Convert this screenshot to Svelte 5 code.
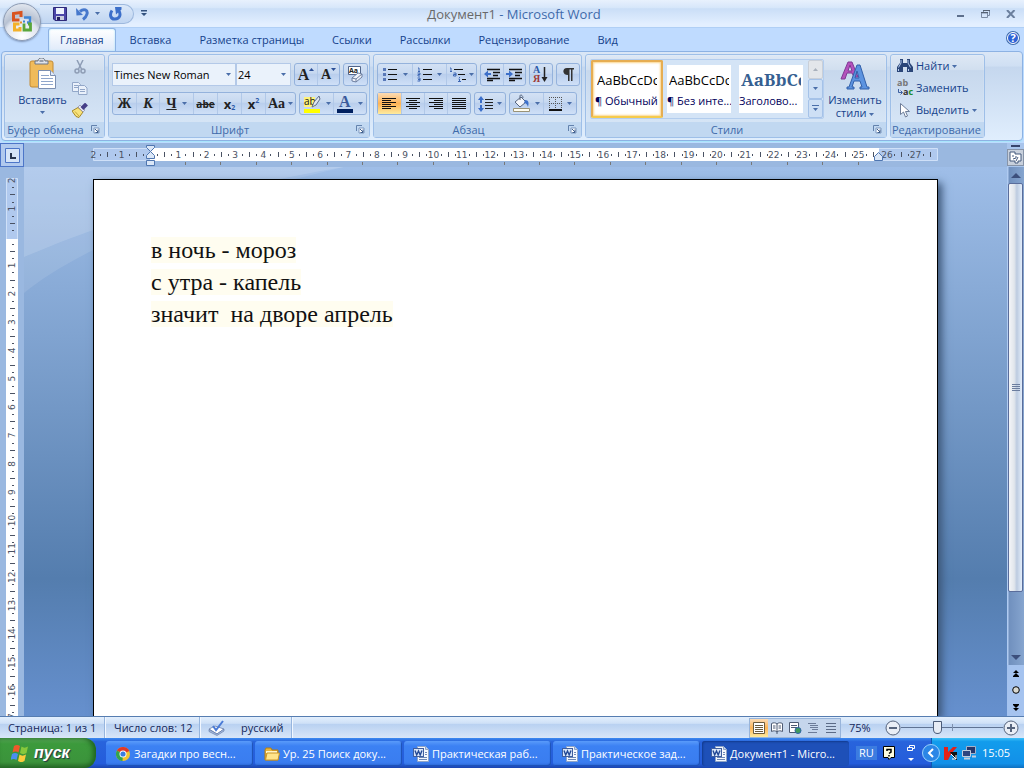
<script>
  const tabs = ['Главная', 'Вставка', 'Разметка страницы', 'Ссылки', 'Рассылки', 'Рецензирование', 'Вид'];
  let activeTab = $state('Главная');

  const styles = [
    { name: '¶ Обычный', sample: 'AaBbCcDc' },
    { name: '¶ Без инте...', sample: 'AaBbCcDc' },
    { name: 'Заголово...', sample: 'AaBbCc', heading: true }
  ];
  let activeStyle = $state(0);

  const lines = ['в ночь - мороз', 'с утра - капель', 'значит  на дворе апрель'];

  const tasks = [
    { icon: 'chrome', title: 'Загадки про весн...' },
    { icon: 'folder', title: 'Ур. 25 Поиск доку...' },
    { icon: 'word', title: 'Практическая раб...' },
    { icon: 'word', title: 'Практическое зад...' },
    { icon: 'word', title: 'Документ1 - Micro...', active: true }
  ];

  // one centimetre of the ruler at 75% zoom
  const cm = 28.35;

  function marks(from, to) {
    const list = [];
    for (let q = from * 4; q <= to * 4; q++) {
      if (q === 0) continue;
      list.push({
        at: (q / 4) * cm,
        kind: q % 4 === 0 ? 'label' : q % 2 === 0 ? 'tick' : 'dot',
        label: Math.abs(q / 4)
      });
    }
    return list;
  }

  const across = marks(-2, 27.5);
  const down = marks(-2, 30);
  const tabStops = Array.from({ length: 20 }, (_, i) => 92 + i * 35.4);
</script>

{#snippet caret()}
  <svg class="caret" width="5" height="3" viewBox="0 0 5 3"><path d="M0 0h5L2.500 3z" fill="#4a6ea9" /></svg>
{/snippet}

{#snippet launcher(label)}
  <button class="launcher" aria-label={label}>
    <svg width="9" height="9" viewBox="0 0 9 9">
      <path d="M.5 6V.5H6" fill="none" stroke="#6382ad" />
      <path d="M3 3h5v5H3z" fill="#fff" stroke="#7b97bf" />
      <path d="M4 4l3 3M7 4.500v3H4.500" fill="none" stroke="#41618f" />
    </svg>
  </button>
{/snippet}

{#snippet bars(kind)}
  <svg width="15" height="11" viewBox="0 0 15 11" stroke="#111" fill="none">
    {#if kind === 'left'}
      <path d="M0 .5h14M0 2.500h9M0 4.500h14M0 6.500h9M0 8.500h14M0 10.500h9" />
    {:else if kind === 'center'}
      <path d="M0 .5h14M3 2.500h8M0 4.500h14M3 6.500h8M0 8.500h14M3 10.500h8" />
    {:else if kind === 'right'}
      <path d="M0 .5h14M5 2.500h9M0 4.500h14M5 6.500h9M0 8.500h14M5 10.500h9" />
    {:else}
      <path d="M0 .5h14M0 2.500h14M0 4.500h14M0 6.500h14M0 8.500h14M0 10.500h14" />
    {/if}
  </svg>
{/snippet}

{#snippet taskIcon(kind)}
  {#if kind === 'chrome'}
    <svg width="16" height="16" viewBox="0 0 16 16">
      <circle cx="8" cy="8" r="7" fill="#f4c430" />
      <path d="M8 8L1.900 4.500A7 7 0 0 1 14.300 5z" fill="#e0392b" />
      <path d="M8 8L1.900 4.500A7 7 0 0 0 7.500 15z" fill="#32a350" />
      <circle cx="8" cy="8" r="3.500" fill="#fff" />
      <circle cx="8" cy="8" r="2.600" fill="#3b7de0" />
    </svg>
  {:else if kind === 'folder'}
    <svg width="16" height="16" viewBox="0 0 16 16">
      <path d="M1 4l1-2h5l1 2h6v10H1z" fill="#e8b53c" stroke="#b57f14" />
      <path d="M2 5h11v2H2z" fill="#fff6c8" />
      <path d="M3 7h12.500l-1.500 7H1.500z" fill="#ffe48a" stroke="#c9952a" />
    </svg>
  {:else}
    <svg width="16" height="16" viewBox="0 0 16 16">
      <path d="M4.500.5h8l3 3v12h-11z" fill="#f5f8fd" stroke="#8fa4c6" />
      <path d="M12.500.5v3h3" fill="#c4d5ee" stroke="#8fa4c6" />
      <path d="M6 11.500h8M6 13.500h8M12 6.500h2M12 8.500h2" stroke="#6c87b5" />
      <rect x=".5" y="2.500" width="10" height="8" fill="#d9e6f9" stroke="#405f9f" />
      <path d="M2 4.500l1.700 4.500L5.500 5l1.700 4L9 4.500" fill="none" stroke="#244a96" stroke-width="1.400" />
    </svg>
  {/if}
{/snippet}

<div class="screen">
  <header>
    <div class="titlebar">
      <div class="quick">
        <button aria-label="Сохранить">
          <svg width="14" height="14" viewBox="0 0 14 14">
            <path d="M.5.5h13v13H2L.5 12z" fill="#4b46a8" stroke="#2e2a79" />
            <path d="M3 1h8v6H3z" fill="#eef3fd" />
            <path d="M3 9h8v4H3z" fill="#c9cede" /><path d="M4 10h3v3H4z" fill="#23205e" />
          </svg>
        </button>
        <button class="undo" aria-label="Отменить">
          <svg width="13" height="14" viewBox="0 0 13 14">
            <path d="M4 4.500C8 1 12 3 11 7c-.5 2-2 4-4 5.500" fill="none" stroke="#4678cc" stroke-width="3" />
            <path d="M0 1l.5 7.500L7 8z" fill="#4678cc" />
          </svg>
        </button>
        {@render caret()}
        <button class="redo" aria-label="Повторить">
          <svg width="13" height="14" viewBox="0 0 13 14">
            <path d="M3 3.500C0 8 2 12.500 6 12c5 0 6-4.500 4-8" fill="none" stroke="#3c6fc9" stroke-width="3" />
            <path d="M6 0h6.500v2.500L7 7.500z" fill="#3c6fc9" />
          </svg>
        </button>
      </div>
      <button class="customize" aria-label="Настройка панели">
        <svg width="6" height="7" viewBox="0 0 6 7"><path d="M0 0h6v1.500H0zM0 3h6L3 6z" fill="#33527f" /></svg>
      </button>
      <h1><span>Документ1</span> - Microsoft Word</h1>
      <div class="window-buttons">
        <button aria-label="Свернуть">
          <svg width="8" height="9" viewBox="0 0 8 9"><path d="M0 7h7" stroke="#5d6f8c" stroke-width="2" /></svg>
        </button>
        <button aria-label="Восстановить">
          <svg width="9" height="8" viewBox="0 0 9 8"><path d="M2.500 2V.5h6v5H7M.5 3h6v4.500h-6z" fill="none" stroke="#7a8aa3" /><path d="M2 .5h7M0 2.500h7" stroke="#566273" /></svg>
        </button>
        <button aria-label="Закрыть">
          <svg width="10" height="8" viewBox="0 0 10 8"><path d="M1 0l7.500 8M8.500 0L1 8" stroke="#6b7f9d" stroke-width="2" /></svg>
        </button>
      </div>
    </div>

    <button class="office" aria-label="Кнопка Office">
      <svg width="24" height="24" viewBox="0 0 24 24" fill="none" stroke-width="3">
        <path d="M9.500 10H3.500V3.500L11 2.500V7" stroke="#d9531e" />
        <path d="M14 7.500h6v5h-3" stroke="#3f86d6" stroke-width="2.400" />
        <path d="M9.500 14H4.500v6H10v-3" stroke="#f3b12a" />
        <path d="M14 13.500v6.500h6.500v-6H18" stroke="#5aa63b" stroke-width="2.800" />
        <path d="M10 11.500h2v2h-2z" fill="#e88d2a" stroke="none" />
        <path d="M13 10.500h2v2h-2z" fill="#3f86d6" stroke="none" />
      </svg>
    </button>

    <nav class="tabs">
      {#each tabs as tab}
        <button class="tab" class:active={tab === activeTab} onclick={() => (activeTab = tab)}>{tab}</button>
      {/each}
      <button class="help" aria-label="Справка">?</button>
    </nav>

    <div class="ribbon">
      <section class="group clipboard">
        <div class="controls">
          <button class="big paste">
            <svg width="28" height="32" viewBox="0 0 28 32">
              <rect x="1" y="3" width="23" height="26" rx="2" fill="#f0bb5b" stroke="#c28a34" />
              <path d="M6 6V3h3c0-4 7-4 7 0h3v3z" fill="#dfe3ea" stroke="#6d7787" />
              <path d="M10.500 3h4" stroke="#4d5768" />
              <path d="M9.500 12.500h12l5 5v13h-17z" fill="#fff" stroke="#7b8fb2" />
              <path d="M21.500 12.500v5h5" fill="#dfe9f8" stroke="#7b8fb2" />
              <path d="M12 17.500h8M12 20.500h12M12 23.500h12M12 26.500h12" stroke="#8fa6cb" />
            </svg>
            <span>Вставить</span>
            {@render caret()}
          </button>
          <div class="clip-small">
            <button aria-label="Вырезать">
              <svg width="12" height="14" viewBox="0 0 12 14" fill="none" stroke="#8e9db5" stroke-width="1.500">
                <path d="M3 0l4.500 9M9 0L4.500 9" /><circle cx="3" cy="11" r="2" /><circle cx="9" cy="11" r="2" />
              </svg>
            </button>
            <button aria-label="Копировать">
              <svg width="16" height="13" viewBox="0 0 16 13" fill="#eaf1fb" stroke="#92a7c8">
                <path d="M.5.5h6l2 2v7h-8zM2 3.500h4M2 5.500h4" /><path d="M6.500 3.500h6l2.500 2.500v6.500H6.500zM8 7.500h5M8 9.500h5" />
              </svg>
            </button>
            <button aria-label="Формат по образцу">
              <svg width="16" height="15" viewBox="0 0 16 15">
                <path d="M0 8l6-3.500 5 4.500-4 5.500-3-1z" fill="#f7e27a" stroke="#a48627" /><path d="M3 8.500l4 4.500" stroke="#c9a93c" />
                <path d="M6 4l5 5 2-2-5-5z" fill="#e9e9f2" stroke="#77799a" stroke-width=".6" /><path d="M10 5.500l4.500-4.500" stroke="#453f88" stroke-width="4" />
              </svg>
            </button>
          </div>
        </div>
        <footer><span>Буфер обмена</span>{@render launcher('Буфер обмена')}</footer>
      </section>

      <section class="group font">
        <div class="controls rows">
          <div class="row">
            <div class="combos">
              <select class="family" aria-label="Шрифт"><option>Times New Roman</option></select>
              <select class="size" aria-label="Размер шрифта"><option>24</option></select>
            </div>
            <div class="cluster">
              <button class="b22 serif grow" aria-label="Увеличить размер">A<svg width="5" height="3" viewBox="0 0 5 3"><path d="M0 3h5L2.500 0z" fill="#2c4f96" /></svg></button>
              <button class="b22 serif shrink" aria-label="Уменьшить размер">A<svg width="5" height="3" viewBox="0 0 5 3"><path d="M0 0h5L2.500 3z" fill="#2c4f96" /></svg></button>
            </div>
            <div class="cluster">
              <button class="b23" aria-label="Очистить формат">
                <svg width="17" height="17" viewBox="0 0 17 17">
                  <path d="M1.500.5h12v8h-12z" fill="#fff" stroke="#51658a" />
                  <text x="2" y="7" font-size="7" font-weight="bold" fill="#222">Aa</text>
                  <path d="M5 12l6-5 4 1v3l-6 5-4-1z" fill="#f0f3fa" stroke="#6d7fa0" /><path d="M5 12l4 1v3M9 13l6-5" fill="none" stroke="#6d7fa0" />
                </svg>
              </button>
            </div>
          </div>
          <div class="row">
            <div class="cluster">
              <button class="b23 serif"><b>Ж</b></button>
              <button class="b23 serif"><b><i>К</i></b></button>
              <button class="b34 serif"><b><u>Ч</u></b>{@render caret()}</button>
              <button class="b24 strike"><s>abe</s></button>
              <button class="b24 script"><b>x</b><sub>2</sub></button>
              <button class="b24 script"><b>x</b><sup>2</sup></button>
              <button class="b30 serif case">Aa{@render caret()}</button>
            </div>
            <div class="cluster">
              <button class="b33" aria-label="Цвет выделения текста">
                <svg width="18" height="18" viewBox="0 0 18 18">
                  <path d="M1 2h11v10H1z" fill="#fff27a" />
                  <text x="1" y="10" font-size="10" fill="#111">ab</text>
                  <path d="M16 1l-5 6-2 5 4-2 4-6z" fill="#dfe6f2" stroke="#5f6f8c" />
                  <path d="M1 14h16v4H1z" fill="#ff0" />
                </svg>
                {@render caret()}
              </button>
              <button class="b33" aria-label="Цвет текста">
                <svg width="16" height="18" viewBox="0 0 16 18">
                  <text x="2" y="12" font-size="16" font-weight="bold" font-family="Liberation Serif, serif" fill="#3a5a9b">A</text>
                  <path d="M0 14h16v4H0z" fill="#00205f" />
                </svg>
                {@render caret()}
              </button>
            </div>
          </div>
        </div>
        <footer><span>Шрифт</span>{@render launcher('Шрифт')}</footer>
      </section>

      <section class="group paragraph">
        <div class="controls rows">
          <div class="row">
            <div class="cluster">
              <button class="b34" aria-label="Маркеры">
                <svg width="15" height="13" viewBox="0 0 15 13"><path d="M5 1.500h9M5 6.500h9M5 11.500h9" stroke="#111" /><path d="M0 0h3v3H0zM0 5h3v3H0zM0 10h3v3H0z" fill="#5878b8" /></svg>
                {@render caret()}
              </button>
              <button class="b34" aria-label="Нумерация">
                <svg width="15" height="15" viewBox="0 0 15 15" fill="none"><path d="M6 2.500h9M6 7.500h9M6 12.500h9" stroke="#111" /><path d="M1 1h1v3M1 4.500h2M.5 6H3v1.500H1V9h2M.5 11H3v3H.5M1 12.500h2" stroke="#3c66b4" /></svg>
                {@render caret()}
              </button>
              <button class="b30" aria-label="Многоуровневый список">
                <svg width="17" height="15" viewBox="0 0 17 15" fill="none"><path d="M5 2.500h9M9 7.500h7M13 12.500h4" stroke="#111" /><path d="M1 1h1v3M1 4.500h2M4.500 6H7v3H4.500V7.500H7M10.500 10v1M9.500 12h1v2.500M9 14.500h3" stroke="#3c66b4" /></svg>
                {@render caret()}
              </button>
            </div>
            <div class="cluster">
              <button class="b22" aria-label="Уменьшить отступ">
                <svg width="17" height="14" viewBox="0 0 17 14"><path d="M3 1.500h13M9 4.500h7M9 7.500h5M3 10.500h13M3 12.500h6" stroke="#111" stroke-width="1.500" /><path d="M0 6l4-3.500v2.500h3v2H4v2.500z" fill="#3c6fc9" /></svg>
              </button>
              <button class="b22" aria-label="Увеличить отступ">
                <svg width="17" height="14" viewBox="0 0 17 14"><path d="M3 1.500h13M9 4.500h7M9 7.500h5M3 10.500h13M3 12.500h6" stroke="#111" stroke-width="1.500" /><path d="M7 6L3 2.500v2.500H0v2h3v2.500z" fill="#3c6fc9" /></svg>
              </button>
            </div>
            <div class="cluster">
              <button class="b22" aria-label="Сортировка">
                <svg width="16" height="17" viewBox="0 0 16 17" font-size="10" font-weight="bold" font-family="Liberation Serif, serif"><text x="0" y="7" fill="#2c5aa8">А</text><text x="0" y="16" fill="#a03a36">Я</text><path d="M11.500 1v12" stroke="#222" stroke-width="1.500" /><path d="M8.500 11h6l-3 5z" fill="#222" /></svg>
              </button>
            </div>
            <div class="cluster">
              <button class="b22" aria-label="Знаки абзаца">
                <svg width="11" height="13" viewBox="0 0 11 13"><path d="M11 0v1.500H9.500V13H8V1.500H6.500V13H5V7C-1 7-1 0 4 0z" fill="#333" /></svg>
              </button>
            </div>
          </div>
          <div class="row">
            <div class="cluster">
              <button class="b23 chosen" aria-label="По левому краю">{@render bars('left')}</button>
              <button class="b23" aria-label="По центру">{@render bars('center')}</button>
              <button class="b23" aria-label="По правому краю">{@render bars('right')}</button>
              <button class="b23" aria-label="По ширине">{@render bars('both')}</button>
            </div>
            <div class="cluster">
              <button class="b30" aria-label="Интервал">
                <svg width="16" height="16" viewBox="0 0 16 16"><path d="M7 3.500h8M7 6.500h8M7 9.500h8M7 12.500h8" stroke="#222" /><path d="M3 0l3 4H4v3H2V4H0zM3 16l3-4H4V9H2v3H0z" fill="#3c6fc9" /></svg>
                {@render caret()}
              </button>
            </div>
            <div class="cluster">
              <button class="b33" aria-label="Заливка">
                <svg width="17" height="17" viewBox="0 0 17 17"><path d="M2 7l6-5 5 5-6 5z" fill="#f4f6fb" stroke="#56657f" /><path d="M7 5V1c0-2 3-1 3 2" fill="none" stroke="#56657f" /><path d="M12 5c4 0 4 3 3 7-1-3-2-4-4-4z" fill="#3c6fc9" /><path d="M.5 13.500h16v3H.5z" fill="#fffdf0" stroke="#9a9377" /></svg>
                {@render caret()}
              </button>
              <button class="b33" aria-label="Границы">
                <svg width="13" height="14" viewBox="0 0 13 14"><path d="M0 .5h13M0 6.500h13M.5 0v13M6.500 0v13M12.500 0v13" stroke="#555" stroke-dasharray="1 1" /><path d="M0 13h13" stroke="#111" stroke-width="2" /></svg>
                {@render caret()}
              </button>
            </div>
          </div>
        </div>
        <footer><span>Абзац</span>{@render launcher('Абзац')}</footer>
      </section>

      <section class="group styles">
        <div class="controls">
          <div class="gallery">
            {#each styles as style, i}
              <button class="style" class:selected={i === activeStyle} onclick={() => (activeStyle = i)}>
                <span class="sample" class:heading={style.heading}>{style.sample}</span>
                <span class="style-name">{style.name}</span>
              </button>
            {/each}
            <div class="gallery-scroll">
              <button class="off" aria-label="Вверх"><svg width="5" height="3" viewBox="0 0 5 3"><path d="M0 3h5L2.500 0z" fill="#a9b1bc" /></svg></button>
              <button aria-label="Вниз">{@render caret()}</button>
              <button aria-label="Ещё"><svg width="7" height="7" viewBox="0 0 7 7"><path d="M0 0h7v1H0zM1 3h5L3.500 6z" fill="#4a6ea9" /></svg></button>
            </div>
          </div>
          <button class="big change">
            <svg width="30" height="30" viewBox="0 0 30 30">
              <path fill-rule="evenodd" d="M1 19l7-17h4l6 15h-4l-2-4H7l-2 6zM8 11h4L10 5z" fill="#b452bd" stroke="#7f3a94" />
              <path fill-rule="evenodd" d="M7 29v-2h2L17 5h3l7 22h2v2h-9v-2h2l-2-6h-6l-2 6h2v2zM15 18h4L17 11z" fill="#5c93e0" stroke="#3260aa" />
            </svg>
            <span>Изменить<br />стили {@render caret()}</span>
          </button>
        </div>
        <footer><span>Стили</span>{@render launcher('Стили')}</footer>
      </section>

      <section class="group editing">
        <div class="controls edit-list">
          <button>
            <svg width="16" height="16" viewBox="0 0 16 16"><path d="M3 1h3v4h4V1h3v4l3 4v5h-6V9H6v5H0V9l3-4z" fill="#2b4678" /><path d="M4 2v3L1.500 9.500M11 2v3l2.500 4.500M1.500 11v2M11.500 11v2" stroke="#b7cdf0" fill="none" /></svg>
            <span>Найти</span>{@render caret()}
          </button>
          <button>
            <svg width="16" height="16" viewBox="0 0 16 16" font-size="9" font-weight="bold"><text x="0" y="6" fill="#777">ab</text><text x="6" y="15" fill="#1b8a2d"><tspan fill="#333">a</tspan>c</text><path d="M1.500 9v3.500H5M3.500 10.500l2 2-2 2" fill="none" stroke="#3c5f9f" /></svg>
            <span>Заменить</span>
          </button>
          <button>
            <svg width="16" height="16" viewBox="0 0 16 16"><path d="M3.500 1.500v11l3-2.500 2 5 2-1-2-4.500h4z" fill="#fff" stroke="#6d7d98" /></svg>
            <span>Выделить</span>{@render caret()}
          </button>
        </div>
        <footer><span>Редактирование</span></footer>
      </section>
    </div>
  </header>

  <main>
    <button class="tab-kind" aria-label="Табуляция">
      <svg width="15" height="15" viewBox="0 0 15 15"><path d="M.5.5h14v14H.5z" fill="#d5e4f8" stroke="#4d76c8" /><path d="M6 5v5h5" fill="none" stroke="#26344e" stroke-width="2" /></svg>
    </button>

    <div class="ruler">
      <svg width="846" height="24" viewBox="-57 0 846 24">
        <path d="M-56.500 5.500h844v12h-844z" fill="#b0c9ee" stroke="#cfe0f8" />
        <path d="M0 5h729v13H0z" fill="#fff" />
        {#each across as mark}
          {#if mark.kind === 'label'}
            <text x={mark.at} y="15" text-anchor="middle">{mark.label}</text>
          {:else if mark.kind === 'tick'}
            <rect x={Math.round(mark.at)} y="9" width="1" height="5" />
          {:else}
            <rect x={Math.round(mark.at)} y="11" width="1" height="2" />
          {/if}
        {/each}
        {#each tabStops as stop}
          <rect x={Math.round(stop) - 57} y="19" width="1" height="3" fill="#777" />
        {/each}
        <path d="M-3.500 2.500h8v2l-4 4 4 4v3h-8v-3l4-4-4-4zM-3.500 17.500h8v5h-8z" fill="#dbe7f7" stroke="#4f76b0" />
        <path d="M724.500 17.500v-4l4-4 4 4v4z" fill="#dbe7f7" stroke="#4f76b0" />
      </svg>
    </div>

    <div class="scroll-top">
      <span class="split"></span>
      <button aria-label="Линейка">
        <svg width="13" height="13" viewBox="0 0 13 13"><path d="M1 1h5v2h6v7H9v2H6v-2H1z" fill="#fff" stroke="#43587c" /><path d="M4 4v2M7 5v2M4 8l3-1M9 6l-2 4" stroke="#43587c" /></svg>
      </button>
    </div>

    <div class="side-ruler">
      <svg width="12" height="900" viewBox="0 -59 12 900">
        <path d="M.5-58.500h11v900H.5z" fill="#b0c9ee" stroke="#cfe0f8" />
        <path d="M0 2h12v840H0z" fill="#fff" />
        {#each down as mark}
          {#if mark.kind === 'label'}
            <text transform="translate(9 {mark.at}) rotate(-90)" text-anchor="middle">{mark.label}</text>
          {:else if mark.kind === 'tick'}
            <rect x="4" y={Math.round(mark.at)} width="5" height="1" />
          {:else}
            <rect x="6" y={Math.round(mark.at)} width="2" height="1" />
          {/if}
        {/each}
      </svg>
    </div>

    <div class="desk">
      <article class="page" contenteditable="true">
        {#each lines as line}
          <p><span>{line}</span></p>
        {/each}
      </article>
    </div>

    <div class="scrollbar">
      <button class="arrow" aria-label="Прокрутить вверх"><svg width="10" height="5" viewBox="0 0 10 5"><path d="M0 5h10L5 0z" fill="#3c4f7c" /></svg></button>
      <div class="thumb"><i></i><i></i><i></i><i></i></div>
      <div class="rest"></div>
      <button class="arrow" aria-label="Прокрутить вниз"><svg width="10" height="5" viewBox="0 0 10 5"><path d="M0 0h10L5 5z" fill="#3c4f7c" /></svg></button>
      <div class="browse">
        <button aria-label="Предыдущая страница"><svg width="6" height="7" viewBox="0 0 6 7"><path d="M0 3l3-3 3 3zM0 6l3-3 3 3zM0 6h6v1H0z" fill="#000" /></svg></button>
        <button aria-label="Объект перехода"><svg width="8" height="8" viewBox="0 0 8 8"><circle cx="4" cy="4" r="3.300" fill="#d8d8d0" stroke="#000" /></svg></button>
        <button aria-label="Следующая страница"><svg width="6" height="7" viewBox="0 0 6 7"><path d="M0 4l3 3 3-3zM0 1l3 3 3-3zM0 0h6v1H0z" fill="#000" /></svg></button>
      </div>
    </div>
  </main>

  <div class="status">
    <button class="cell pages">Страница: 1 из 1</button>
    <button class="cell words">Число слов: 12</button>
    <button class="cell lang">
      <svg width="17" height="16" viewBox="0 0 17 16">
        <path d="M1 9l6-3 9 3-7 5z" fill="#fff" stroke="#8193b8" /><path d="M1 9.500v2l8 4 7-4.500V9l-7 5z" fill="#a9bde0" stroke="#5870a0" stroke-width=".6" />
        <path d="M5 6l3 4 7-9" fill="none" stroke="#4a7bd6" stroke-width="2" />
      </svg>
      <span>русский</span>
    </button>
    <div class="views">
      <button class="chosen" aria-label="Разметка страницы"><svg width="12" height="12" viewBox="0 0 12 12"><path d="M.5.5h11v11H.5z" fill="#fff" stroke="#6b5b3e" /><path d="M2 3.500h8M2 5.500h8M2 7.500h8M2 9.500h8" stroke="#6b5b3e" /></svg></button>
      <button aria-label="Режим чтения"><svg width="12" height="12" viewBox="0 0 12 12"><path d="M.5 1.500c2-1 4-1 5.500.5 1.500-1.500 3.500-1.500 5.500-.5v8c-2-1-4-1-5.500.5-1.500-1.500-3.500-1.500-5.500-.5zM6 2v10" fill="#fff" stroke="#4d5b74" /><path d="M2 4h2.500M2 6h2.500M7.500 4H10M7.500 6H10" stroke="#4d5b74" /></svg></button>
      <button aria-label="Веб-документ"><svg width="13" height="12" viewBox="0 0 13 12"><path d="M.5.5h9v10h-9z" fill="#fff" stroke="#4d5b74" /><path d="M2 3.500h6M2 5.500h6" stroke="#4d5b74" /><circle cx="9" cy="8.500" r="3" fill="#3f9b5c" stroke="#2e63a8" /></svg></button>
      <button aria-label="Структура"><svg width="12" height="12" viewBox="0 0 12 12"><path d="M1 1.500h8M3 3.500h8M3 5.500h8M5 7.500h6M1 10.500h9" stroke="#6c7c98" /></svg></button>
      <button aria-label="Черновик"><svg width="12" height="12" viewBox="0 0 12 12"><path d="M1 1.500h10M1 4.500h10M1 7.500h10M1 10.500h10" stroke="#5b6b86" /></svg></button>
    </div>
    <button class="percent">75%</button>
    <button class="round" aria-label="Уменьшить"><svg width="16" height="16" viewBox="0 0 16 16"><circle cx="8" cy="8" r="7" fill="#e9eef6" stroke="#56647d" /><path d="M4 8h8" stroke="#56647d" stroke-width="2" /></svg></button>
    <input class="zoom" type="range" min="10" max="200" value="76" aria-label="Масштаб" />
    <button class="round" aria-label="Увеличить"><svg width="16" height="16" viewBox="0 0 16 16"><circle cx="8" cy="8" r="7" fill="#e9eef6" stroke="#56647d" /><path d="M4 8h8M8 4v8" stroke="#56647d" stroke-width="2" /></svg></button>
  </div>

  <div class="taskbar">
    <button class="start">
      <svg width="20" height="18" viewBox="0 0 20 18">
        <path d="M3 2c2-1.500 4-1.500 6 0L7.500 8.500c-2-1.500-4-1.500-6 0z" fill="#f0592b" />
        <path d="M10.500 2.500c2 1.500 4 1.500 6.500 0L15.500 9c-2 1.500-4.500 1.500-6.500 0z" fill="#86c83c" />
        <path d="M1 10c2-1.500 4-1.500 6 0l-1.500 6c-2-1.500-4-1.500-6 0z" fill="#4a8ff0" />
        <path d="M8.500 10.500c2 1.500 4 1.500 6.500 0L13.500 17c-2 1.500-4.500 1.500-6.500 0z" fill="#fbcb3c" />
      </svg>
      <span>пуск</span>
    </button>
    <div class="tasks">
      {#each tasks as task}
        <button class="task" class:active={task.active}>
          {@render taskIcon(task.icon)}
          <span>{task.title}</span>
        </button>
      {/each}
    </div>
    <div class="language">
      <span class="ru">RU</span>
      <svg width="12" height="14" viewBox="0 0 12 14"><path d="M.5.5h11v11H8l-2 2-1-2H.5z" fill="#fffde0" stroke="#000" /><path d="M4 5V3.500h4V6L6 7.500M6 9v1.500" fill="none" stroke="#000" stroke-width="1.500" /></svg>
      <svg class="tiny" width="8" height="17" viewBox="0 0 8 17"><path d="M2.500 3V.5h5v3H6M.5 2.500h5v3h-5z" fill="none" stroke="#fff" /><path d="M1 13h6l-3 3z" fill="#fff" /></svg>
    </div>
    <div class="tray">
      <button class="chevron" aria-label="Показать значки"><svg width="18" height="18" viewBox="0 0 18 18"><circle cx="9" cy="9" r="8.500" fill="#2b86e6" stroke="#9cd2fb" /><path d="M11 5L7 9l4 4" fill="none" stroke="#fff" stroke-width="2" /></svg></button>
      <svg width="15" height="15" viewBox="0 0 15 15"><path d="M1 1h4v5l5-5h4L8 8l-3 6H1z" fill="#e32219" /><path d="M7 6h7v8h-2z" fill="#111" /><path d="M8 8l5 5M13 9v4H9" stroke="#fff" fill="none" /></svg>
      <svg width="16" height="16" viewBox="0 0 16 16"><path d="M5.500 1.500h9v7h-9z" fill="#25366b" stroke="#a5b2ca" /><path d="M1.500 5.500h8v6h-8z" fill="#2f4480" stroke="#c4cedf" /><path d="M3 13.500h6M11 11.500h4" stroke="#c4cedf" stroke-width="2" /></svg>
      <time>15:05</time>
    </div>
  </div>
</div>

<style>
  :global(body) {
    margin: 0;
  }

  .screen {
    display: flex;
    flex-direction: column;
    height: 100vh;
    overflow: hidden;
    background: #bfdbff;
    color: #15428b;
    font: 11px/14px "Open Sans", "Noto Sans", sans-serif;
  }

  button,
  select {
    border: 0;
    margin: 0;
    padding: 0;
    background: none;
    color: inherit;
    font: inherit;
  }

  svg {
    display: block;
    flex: none;
  }

  header {
    position: relative;
    flex: none;
  }

  .titlebar {
    display: flex;
    align-items: center;
    height: 28px;
    padding-right: 8px;
    background: linear-gradient(#e8f1fd, #d6e6fa 30%, #cadef7 32%, #e3efff 90%);
    border-bottom: 1px solid #b0cff5;
    box-sizing: border-box;
  }

  .quick {
    display: flex;
    align-items: center;
    height: 20px;
    width: 94px;
    margin-left: 40px;
    padding-left: 13px;
    box-sizing: border-box;
    border: 1px solid #9db8dd;
    border-left: 0;
    border-radius: 0 11px 11px 0;
    background: linear-gradient(#dbe8f9, #c0d5f1);
  }

  .undo {
    margin: 0 6px 0 9px;
  }

  .redo {
    margin-left: 9px;
  }

  .customize {
    margin-left: 7px;
  }

  h1 {
    flex: 1;
    margin: 0;
    padding-right: 76px;
    text-align: center;
    font-size: 13px;
    line-height: 20px;
    font-weight: 400;
    color: #3e6aaa;
  }

  h1 span {
    color: #696969;
  }

  .window-buttons {
    display: flex;
    gap: 16px;
  }

  .office {
    position: absolute;
    left: 3px;
    top: 3px;
    display: grid;
    place-items: center;
    width: 38px;
    height: 38px;
    border: 1px solid #8d9bb3;
    border-radius: 50%;
    background: radial-gradient(circle at 50% 90%, #fff, #dfe4ee 45%, #b7c1d2 55%, #f2f5fa);
    box-shadow: 0 1px 2px #7d93b6;
  }

  .tabs {
    display: flex;
    height: 23px;
    padding: 0 5px 0 48px;
    align-items: center;
  }

  .tab {
    height: 23px;
    padding: 0 13px;
    border: 1px solid transparent;
    border-bottom: 0;
    white-space: nowrap;
  }

  .tab.active {
    padding: 0 11px;
    border-color: #8db2e3;
    border-radius: 3px 3px 0 0;
    background: linear-gradient(#fff, #dfeafa);
    box-shadow: inset 0 0 2px #9fe4ff;
  }

  .help {
    width: 12px;
    height: 12px;
    margin: 0 0 3px auto;
    border: 1px solid #fff;
    border-radius: 50%;
    background: #2e62d6;
    color: #fff;
    font-weight: 700;
    line-height: 10px;
    box-shadow: 0 0 0 1px #3f6cae;
  }

  .ribbon {
    display: flex;
    gap: 3px;
    height: 90px;
    margin: 0 1px;
    padding: 2px;
    box-sizing: border-box;
    border: 1px solid #8db2e3;
    border-radius: 4px;
    background: linear-gradient(#dbe7f6, #cfdff3 16%, #c5d7ee 17%, #e0eefd);
    box-shadow: 0 1px 1px #a6e6fb;
  }

  .group {
    display: flex;
    flex-direction: column;
    flex: none;
    box-sizing: border-box;
    border: 1px solid #9ebfe8;
    border-radius: 3px;
    background: linear-gradient(#dee8f5, #d1dfef 18%, #c7d8ed 19%, #d9e8f8);
    box-shadow: inset 0 0 1px #fff;
  }

  .clipboard { width: 101px; }
  .font { width: 262px; }
  .paragraph { width: 209px; }
  .styles { width: 302px; }
  .editing { width: 95px; }

  .controls {
    display: flex;
    flex: 1;
  }

  footer {
    display: flex;
    align-items: center;
    gap: 6px;
    height: 15px;
    padding: 0 4px 0 1px;
    background: #c1d8f1;
    color: #3e6aaa;
  }

  footer span {
    flex: 1;
    text-align: center;
    white-space: nowrap;
  }

  .big {
    display: flex;
    flex-direction: column;
    align-items: center;
  }

  .paste {
    width: 67px;
    padding: 3px 0 0 8px;
  }

  .paste span {
    margin: 3px 0 4px;
  }

  .clip-small {
    display: flex;
    flex-direction: column;
    align-items: center;
    gap: 8px;
    padding-top: 5px;
  }

  .rows {
    flex-direction: column;
    gap: 6px;
    padding: 8px 3px 0;
  }

  .row {
    display: flex;
    gap: 3px;
  }

  .combos {
    display: flex;
  }

  select {
    appearance: none;
    height: 23px;
    box-sizing: border-box;
    border: 1px solid #b3c9e8;
    padding-left: 1px;
    background: #eaf2fb url("data:image/svg+xml,%3Csvg xmlns='http://www.w3.org/2000/svg' width='5' height='3'%3E%3Cpath d='M0 0h5L2.500 3z' fill='%234a6ea9'/%3E%3C/svg%3E") no-repeat right 4px center;
    color: #000;
  }

  .family { width: 124px; }
  .size { width: 55px; }

  .cluster {
    display: flex;
    flex: none;
    height: 23px;
    box-sizing: border-box;
    border: 1px solid #94b2dc;
    border-radius: 3px;
    background: linear-gradient(#d3e1f4, #c6d8f0 45%, #b8cdec 46%, #cfe0f7);
  }

  .cluster button {
    display: flex;
    align-items: center;
    justify-content: center;
    gap: 5px;
    color: #222;
  }

  .cluster button + button {
    border-left: 1px solid #b1c8e8;
  }

  .cluster svg {
    overflow: visible;
  }

  .b22 { width: 22px; }
  .b23 { width: 23px; }
  .b24 { width: 24px; }
  .b30 { width: 30px; }
  .b33 { width: 33px; }
  .b34 { width: 34px; }

  .serif {
    font: 700 14px/18px "Liberation Serif", serif;
  }

  .grow {
    font-size: 16px;
  }

  .cluster .grow,
  .cluster .shrink {
    gap: 0;
    align-items: center;
  }

  .grow svg,
  .shrink svg {
    align-self: flex-start;
    margin-top: 4px;
  }

  .cluster .strike {
    font-size: 10px;
    font-weight: 700;
  }

  .cluster .script {
    gap: 0;
    font-size: 13px;
  }

  .script sub,
  .script sup {
    font-size: 7px;
    font-weight: 700;
    line-height: 7px;
    color: #2c5aa8;
  }

  .script sub {
    align-self: flex-end;
    margin-bottom: 3px;
  }

  .script sup {
    align-self: flex-start;
    margin-top: 4px;
  }

  .cluster .case {
    gap: 2px;
  }

  .cluster .b30 {
    gap: 3px;
  }

  .chosen {
    background: linear-gradient(#fbdbb5, #feb456 50%, #fdeb9f);
  }

  .gallery {
    display: flex;
    flex: none;
    height: 60px;
    width: 234px;
    margin: 4px 0 0 4px;
    box-sizing: border-box;
    border: 1px solid #b3cdee;
    border-radius: 2px;
    background: #d4e4f6;
  }

  .style {
    display: flex;
    flex-direction: column;
    width: 72px;
    box-sizing: border-box;
    border: 5px solid transparent;
    border-width: 5px 4px;
    background: #fff;
    background-clip: padding-box;
    color: #000;
    text-align: left;
    overflow: hidden;
    white-space: nowrap;
  }

  .style.selected {
    border: 2px solid #e6ad52;
    border-bottom-color: #f5cb4c;
    border-radius: 2px;
    padding: 3px 2px;
    box-shadow: inset 0 0 2px 1px #fbd58c;
  }

  .sample {
    width: 60px;
    height: 27px;
    margin: 2px 2px 0;
    overflow: hidden;
    font: 13px/26px "Open Sans", sans-serif;
  }

  .sample.heading {
    font: 700 17px/26px "Noto Serif", "Liberation Serif", serif;
    color: #365f91;
  }

  .style-name {
    color: #00005a;
  }

  .gallery-scroll {
    display: flex;
    flex-direction: column;
    width: 15px;
    margin-left: auto;
  }

  .gallery-scroll button {
    display: grid;
    place-items: center;
    flex: 1;
    border: 1px solid #a5c2e8;
    border-radius: 2px;
    background: #cddff5;
  }

  .gallery-scroll .off {
    background: #e3e6ea;
    border-color: #c9cfd8;
  }

  .change {
    flex: 1;
    padding-top: 5px;
    line-height: 13px;
  }

  .change span {
    margin-top: 3px;
  }

  .change span :global(.caret) {
    display: inline-block;
    vertical-align: middle;
  }

  .edit-list {
    flex-direction: column;
    align-items: flex-start;
    gap: 6px;
    padding: 3px 0 0 6px;
  }

  .edit-list button {
    display: flex;
    align-items: center;
    gap: 3px;
    height: 16px;
  }

  .edit-list svg {
    overflow: visible;
  }

  main {
    display: grid;
    grid-template: 24px 1fr / 24px 1fr 17px;
    flex: 1;
    min-height: 0;
    margin-top: 2px;
    background: #9ab8e0;
  }

  .tab-kind {
    display: grid;
    place-items: center;
    border: 1px solid #4d76c8;
    background: #b0c9ee;
  }

  .ruler {
    display: flex;
    justify-content: center;
    overflow: hidden;
  }

  .ruler text,
  .side-ruler text {
    font: 9px "DejaVu Sans", sans-serif;
  }

  .ruler svg,
  .side-ruler svg {
    fill: #4a5263;
    overflow: visible;
  }

  .scroll-top {
    display: flex;
    flex-direction: column;
    align-items: center;
    gap: 2px;
    padding-top: 2px;
    background: #a9c5ec;
  }

  .split {
    width: 9px;
    height: 2px;
    background: #37456b;
  }

  .scroll-top button {
    padding: 1px;
    border: 1px solid #8794a8;
    background: #c8d0dc;
  }

  .side-ruler {
    display: flex;
    justify-content: center;
    min-height: 0;
    padding-top: 11px;
    overflow: hidden;
  }

  .desk {
    display: flex;
    justify-content: center;
    min-height: 0;
    overflow: hidden;
    background:
      url("data:image/svg+xml,%3Csvg xmlns='http://www.w3.org/2000/svg' width='320' height='130'%3E%3Cpath d='M0 90C70 60 170 25 320 0H0z' fill='%23fff' fill-opacity='.14'/%3E%3Cpath d='M0 126C50 85 150 40 320 0H0z' fill='%23fff' fill-opacity='.1'/%3E%3C/svg%3E") no-repeat,
      linear-gradient(#9fbee8, #547dae 75%, #6690ce);
  }

  .page {
    width: 845px;
    margin-top: 12px;
    padding: 54px 57px 0;
    box-sizing: border-box;
    border: 1px solid #000;
    border-bottom: 0;
    background: #fff;
    box-shadow: 4px 4px 8px #3c5678;
    font: 24px/32px "Liberation Serif", "Times New Roman", serif;
    color: #111;
    outline: none;
  }

  .page p {
    margin: 0;
    white-space: pre-wrap;
  }

  .page span {
    background: #fffdf0;
  }

  .scrollbar {
    display: flex;
    flex-direction: column;
    min-height: 0;
    background: linear-gradient(90deg, #b0cbf1 1px, #7090be 2px, #86a5cf);
  }

  .arrow {
    display: grid;
    place-items: center;
    height: 16px;
  }

  .thumb {
    display: flex;
    flex-direction: column;
    justify-content: center;
    align-items: center;
    gap: 1px;
    flex: 43;
    margin: 0 1px;
    border: 1px solid #5a6d9b;
    border-radius: 2px;
    background: linear-gradient(90deg, #f3f5f8, #e1e6ec 40%, #bccbe0 60%, #e3eefb);
  }

  .thumb i {
    width: 8px;
    height: 1px;
    background: #6b7d9e;
  }

  .rest {
    flex: 6;
  }

  .browse {
    display: flex;
    flex-direction: column;
    align-items: center;
    justify-content: space-around;
    height: 51px;
    background: #a5c3ef;
  }

  .status {
    display: flex;
    align-items: center;
    flex: none;
    height: 22px;
    padding-right: 5px;
    box-sizing: border-box;
    border-top: 1px solid #567db1;
    background: linear-gradient(#e3effd, #cfe1f7 30%, #b9d1f1 35%, #d8e6f8);
  }

  .cell {
    display: flex;
    align-items: center;
    height: 21px;
    border-right: 1px solid #96b5de;
    box-shadow: 1px 0 #f1f7ff;
    box-sizing: border-box;
    color: #15285a;
  }

  .pages {
    width: 105px;
    padding-left: 8px;
    white-space: nowrap;
  }

  .words {
    width: 95px;
    padding-left: 9px;
  }

  .lang {
    width: 92px;
    gap: 16px;
    padding-left: 8px;
  }

  .views {
    display: flex;
    margin-left: auto;
    border: 1px solid #98b4da;
    background: #c5d6ec;
  }

  .views button {
    display: grid;
    place-items: center;
    width: 18px;
    height: 18px;
  }

  .views .chosen {
    background: linear-gradient(#fbdbb5, #feb456 50%, #fdeb9f);
  }

  .percent {
    width: 44px;
    padding-left: 8px;
    text-align: left;
    color: #15285a;
  }

  .zoom {
    appearance: none;
    width: 102px;
    height: 16px;
    margin: 0;
    background:
      linear-gradient(#7d90ae, #7d90ae) no-repeat center / 1px 7px,
      linear-gradient(#5f7393, #5f7393) no-repeat center / 100% 1px;
  }

  .zoom::-webkit-slider-thumb {
    appearance: none;
    width: 9px;
    height: 13px;
    border: 1px solid #4b5c79;
    border-radius: 1px 1px 5px 5px;
    background: #e6ecf5;
  }

  .taskbar {
    display: flex;
    flex: none;
    height: 30px;
    background: linear-gradient(#3c8af0, #2864dc 12%, #245cdb 85%, #1b45ae);
    color: #fff;
  }

  .start {
    display: flex;
    align-items: center;
    gap: 3px;
    width: 96px;
    padding-left: 11px;
    border-radius: 0 12px 12px 0;
    background: linear-gradient(#5aa85a, #3c9a3c 20%, #3b933b 80%, #2b6e2b);
    box-shadow: inset -3px 0 5px #1f6320;
  }

  .start span {
    font: italic 700 16px/20px "Liberation Sans", sans-serif;
    text-shadow: 1px 1px 1px #234;
  }

  .tasks {
    display: flex;
    flex: 1;
    gap: 2px;
    padding: 3px 0 2px 10px;
  }

  .task {
    display: flex;
    align-items: center;
    gap: 3px;
    flex: 0 1 147px;
    padding-left: 9px;
    border-radius: 3px;
    background: linear-gradient(#5a9bfa, #3c81f3 20%, #3a7df0 85%, #2f6bdc);
    box-shadow: inset -1px -1px 1px #1c4fb4;
    white-space: nowrap;
    overflow: hidden;
  }

  .task.active {
    background: #1e50b8;
    box-shadow: inset 1px 1px 2px #123a8e;
  }

  .language {
    display: flex;
    align-items: center;
    gap: 6px;
    width: 82px;
    padding-left: 7px;
    box-sizing: border-box;
  }

  .ru {
    padding: 0 3px;
    background: #3c7ce0;
  }

  .tiny {
    margin-left: 6px;
  }

  .tray {
    display: flex;
    align-items: center;
    gap: 3px;
    width: 93px;
    background: linear-gradient(#3cc0f8, #129cec 12%, #1290e8 85%, #0f70c0);
    box-shadow: inset 1px 0 #0e58b0;
  }

  .chevron {
    margin-left: -9px;
  }

  time {
    margin-left: 2px;
  }
</style>
